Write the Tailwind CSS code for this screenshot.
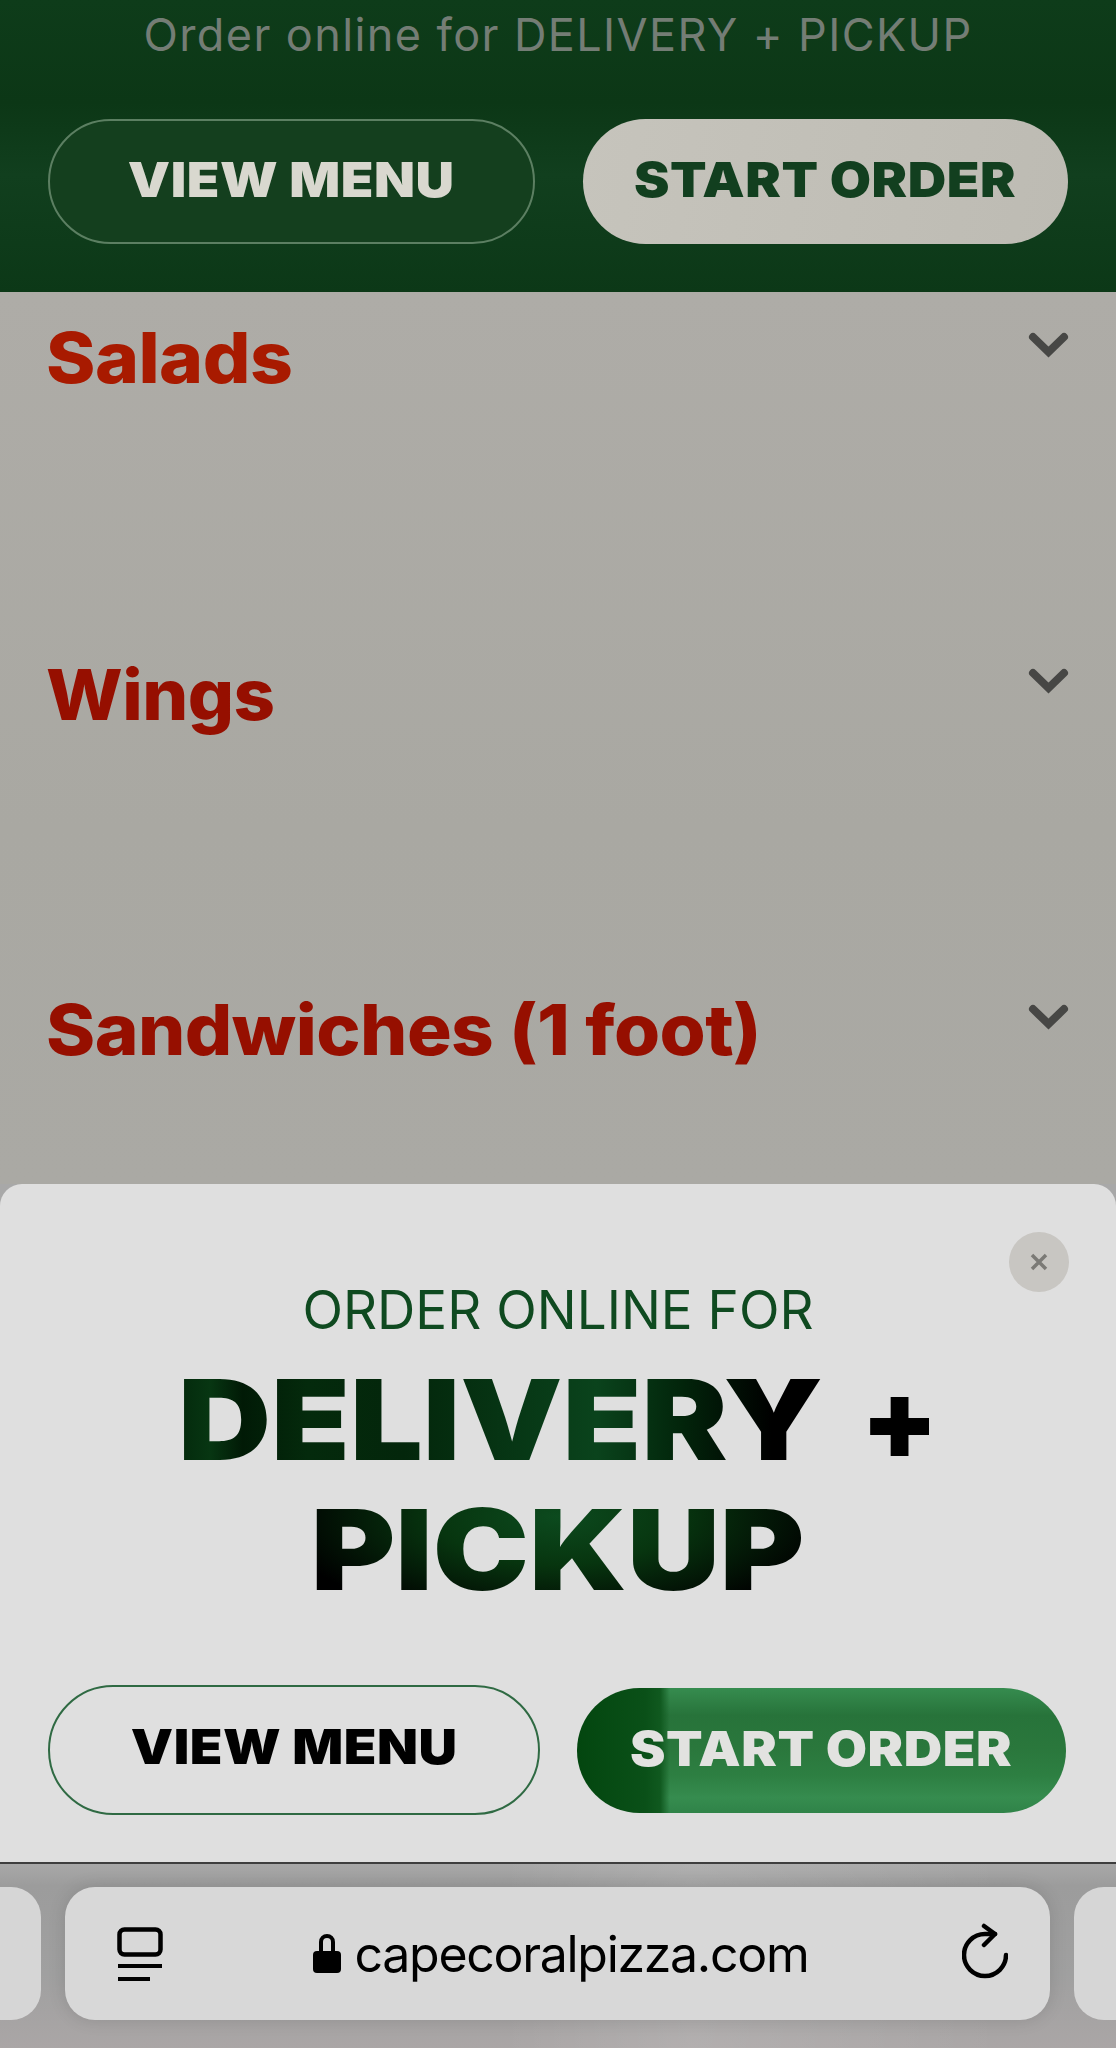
<!DOCTYPE html>
<html lang="en">
<head>
    <meta charset="UTF-8">
    <meta name="viewport" content="width=device-width, initial-scale=1.0">
    <title>Cape Coral Pizza - Menu</title>
    <script src="https://cdn.jsdelivr.net/npm/@tailwindcss/browser@4"></script>
</head>
<body class="font-['Inter',sans-serif] bg-[#a8a8a8]">
<div class="w-[1116px] h-[2048px] overflow-hidden flex flex-col">

    <!-- dimmed site header -->
    <header class="h-[292px] shrink-0 bg-[linear-gradient(180deg,#0e3c1a_0%,#0c3716_35%,#113f1e_60%,#0c3817_100%)] px-12 flex flex-col">
        <p class="h-[70px] text-center text-[#747d75] text-[45px] leading-[70px] tracking-[1.4px] whitespace-nowrap">Order online for DELIVERY + PICKUP</p>
        <div class="mt-[49px] flex justify-between">
            <a class="w-[487px] h-[125px] pb-[4px] rounded-full border-2 border-[#5c7f62] bg-[#143f1e] flex items-center justify-center text-[#d9d8cf] text-[48px] font-black tracking-[0.5px]"><span class="inline-block scale-x-[1.11]">VIEW MENU</span></a>
            <a class="w-[485px] h-[125px] pb-[4px] rounded-full bg-[linear-gradient(100deg,#c6c4bc,#bdbbb3)] flex items-center justify-center text-[#123f1f] text-[48px] font-black tracking-[0.5px]"><span class="inline-block scale-x-[1.11]">START ORDER</span></a>
        </div>
    </header>

    <!-- dimmed menu categories -->
    <main class="h-[892px] shrink-0 bg-[linear-gradient(180deg,#aeaca7_0%,#a9a8a2_60%,#aaa9a4_100%)] px-[46px]">
        <div class="h-[336px] flex justify-between items-start pt-[28px]">
            <h2 class="inline-block origin-left scale-x-[1.07] text-[#a81a00] text-[70px] leading-[76px] font-extrabold tracking-[-0.5px]">Salads</h2>
            <svg class="mt-[12px]" width="42" height="28" viewBox="0 0 42 28" fill="none" stroke="#474745" stroke-width="8" stroke-linecap="round"><path d="M5 5 20.500 20 36 5"/></svg>
        </div>
        <div class="h-[336px] flex justify-between items-start pt-[29px]">
            <h2 class="inline-block origin-left scale-x-[1.035] text-[#960f00] text-[70px] leading-[76px] font-extrabold tracking-[-0.5px]">Wings</h2>
            <svg class="-mt-[1px] translate-y-[12px]" width="42" height="28" viewBox="0 0 42 28" fill="none" stroke="#474745" stroke-width="8" stroke-linecap="round"><path d="M5 5 20.500 20 36 5"/></svg>
        </div>
        <div class="flex justify-between items-start pt-[28px]">
            <h2 class="inline-block origin-left scale-x-[1.065] text-[#960f00] text-[70px] leading-[76px] font-extrabold tracking-[-0.5px]">Sandwiches (1 foot)</h2>
            <svg class="mt-[12px]" width="42" height="28" viewBox="0 0 42 28" fill="none" stroke="#474745" stroke-width="8" stroke-linecap="round"><path d="M5 5 20.500 20 36 5"/></svg>
        </div>
    </main>

    <!-- order popup -->
    <section class="relative h-[680px] shrink-0 bg-[#dfdfdf] rounded-t-[22px] border-b-2 border-[#3e3e3e] flex flex-col items-center">
        <button class="absolute top-[48px] right-[47px] w-[60px] h-[60px] rounded-full bg-[#c8c6c2] flex items-center justify-center">
            <svg width="20" height="20" viewBox="0 0 20 20" stroke="#7b7a76" stroke-width="3.5"><path d="M3 3 17 17M17 3 3 17"/></svg>
        </button>
        <p class="mt-[96px] h-[60px] leading-[60px] text-[53px] text-[#0f4a20] whitespace-nowrap">ORDER ONLINE FOR</p>
        <h1 class="mt-[14px] text-[112px] leading-[130px] font-black text-center">
            <div class="flex justify-center items-baseline">
                <span class="inline-block mx-[42px] scale-x-[1.15] bg-[linear-gradient(90deg,#03290c_0%,#073612_5%,#011a06_10%,#042a0c_20%,#03260b_35%,#083c18_58%,#0a431c_65%,#02250b_78%,#000_92%)] bg-clip-text text-transparent">DELIVERY</span>
                <span class="ml-[38px] text-black">+</span>
            </div>
            <div class="flex justify-center">
                <span class="inline-block scale-x-[1.15] bg-[radial-gradient(ellipse_at_50%_25%,#0c4a1e_0%,#07350f_35%,#000_80%)] bg-clip-text text-transparent">PICKUP</span>
            </div>
        </h1>
        <div class="absolute top-[501px] left-[48px] right-[50px] flex justify-between items-center">
            <a class="w-[492px] h-[130px] pb-[6px] rounded-full border-2 border-[#2f6a43] flex items-center justify-center text-black text-[48px] font-black tracking-[0.5px]"><span class="inline-block scale-x-[1.11]">VIEW MENU</span></a>
            <a class="w-[489px] h-[125px] pb-[2px] rounded-full bg-[linear-gradient(90deg,#03460f_0%,#0a5018_14%,#10591f_17%,transparent_19%),linear-gradient(180deg,#368c4f_0%,#27733a_22%,#2a773c_48%,#2d7f42_70%,#368c4f_88%,#2f8348_100%)] flex items-center justify-center text-[#e2e2e0] text-[48px] font-black tracking-[0.5px]"><span class="inline-block scale-x-[1.11]">START ORDER</span></a>
        </div>
    </section>

    <!-- safari bottom bar -->
    <footer class="flex-1 bg-[linear-gradient(90deg,transparent_45%,rgba(255,255,255,0.1)_62%,transparent_90%),linear-gradient(180deg,#a8a8a8_0%,#9c9c9c_12%,#a0a0a0_60%,#aaa6a6_100%)] pt-[23px] flex items-start">
        <div class="w-[41px] h-[133px] shrink-0 bg-[#d6d6d6] rounded-r-[30px]"></div>
        <div class="ml-[24px] w-[985px] h-[133px] shrink-0 bg-[#d8d8d8] rounded-[30px] flex items-center relative shadow-[0_0_18px_rgba(0,0,0,0.12)]">
            <svg class="absolute left-[52px] top-[40px]" width="46" height="56" viewBox="0 0 46 56" fill="none" stroke="#000">
                <rect x="2.500" y="2.500" width="41" height="25" rx="5" stroke-width="4.500"/>
                <path d="M1 39H45" stroke-width="4"/>
                <path d="M1 52H33" stroke-width="4"/>
            </svg>
            <div class="w-full flex items-center justify-center gap-[14px] pl-[6px]">
                <svg width="28" height="40" viewBox="0 0 28 40" fill="#000"><path d="M6 18V8a8 8 0 0 1 16 0v10h-4V8a4 4 0 0 0-8 0v10z"/><rect x="0" y="17" width="28" height="22" rx="4"/></svg>
                <span class="text-black text-[50px] leading-none tracking-[-1.3px]">capecoralpizza.com</span>
            </div>
            <svg class="absolute right-[42px] top-[36px]" width="46" height="56" viewBox="0 0 46 56" fill="none" stroke="#000" stroke-width="4.500" stroke-linecap="round" stroke-linejoin="round"><path d="M44 32A21 21 0 1 1 23 11H33"/><path d="M22 3 33 11 22 22"/></svg>
        </div>
        <div class="ml-[24px] flex-1 h-[133px] bg-[#d6d6d6] rounded-l-[30px]"></div>
    </footer>
</div>
</body>
</html>
